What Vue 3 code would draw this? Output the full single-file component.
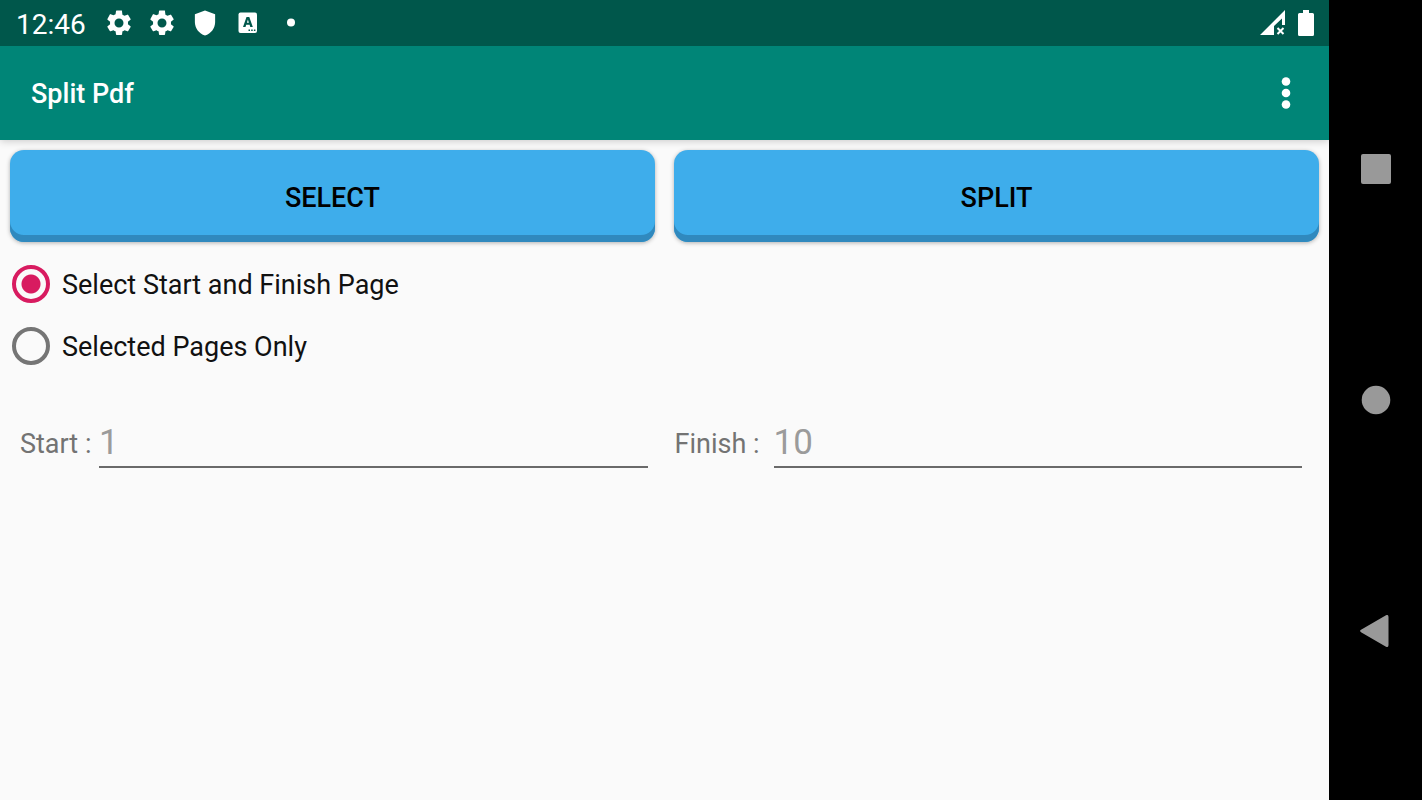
<script setup>
import { ref } from 'vue'

const mode = ref('range')
const start = ref('')
const finish = ref('')
const modes = [
  { value: 'range', label: 'Select Start and Finish Page' },
  { value: 'pages', label: 'Selected Pages Only' },
]
const gear =
  'M19.14 12.94c.04-.3.06-.61.06-.94s-.02-.64-.07-.94l2.03-1.58a.5.5 0 0 0 .12-.61l-1.92-3.32a.5.5 0 0 0-.59-.22l-2.39.96a7 7 0 0 0-1.62-.94l-.36-2.54A.5.5 0 0 0 13.92 2h-3.84a.5.5 0 0 0-.47.41l-.36 2.54a7.4 7.4 0 0 0-1.62.94l-2.39-.96a.5.5 0 0 0-.59.22L2.74 8.87a.5.5 0 0 0 .12.61l2.03 1.58a6 6 0 0 0 0 1.88l-2.03 1.58a.5.5 0 0 0-.12.61l1.92 3.32c.12.22.37.29.59.22l2.39-.96c.5.38 1.03.7 1.62.94l.36 2.54c.05.24.24.41.48.41h3.84c.24 0 .44-.17.47-.41l.36-2.54a7 7 0 0 0 1.62-.94l2.39.96c.22.08.47 0 .59-.22l1.92-3.32a.5.5 0 0 0-.12-.61zM12 15.6a3.6 3.6 0 1 1 0-7.2 3.6 3.6 0 0 1 0 7.2z'
</script>

<template>
  <div class="device">
    <div class="screen">
      <div class="status">
        <span class="clock">12:46</span>
        <div class="notices">
          <svg v-for="n in 2" :key="n" class="icon" viewBox="0 0 24 24"><path :d="gear" /></svg>
          <svg class="icon" viewBox="0 0 24 24">
            <path d="M12 2 3.9 5v6.1c0 5.1 3.3 9.300 8.100 10.900 4.800-1.600 8.100-5.800 8.100-10.900V5z" />
          </svg>
          <svg class="icon" viewBox="0 0 30 30">
            <rect x="5.500" y="4.500" width="18.500" height="20.500" rx="2" />
            <path class="ink" d="M10 19 13.500 9h2.800l3.500 10h-2.500l-.7-2.200h-3.400l-.7 2.200zm3.900-4.200h2l-1-3.200z" />
            <path class="ink" d="M15.500 21.500H17V23h-1.500zM18.200 21.500h1.500V23h-1.500zM20.900 21.500h1.500V23h-1.500z" />
          </svg>
          <svg class="icon" viewBox="0 0 30 30"><circle cx="15" cy="14.500" r="4" /></svg>
        </div>
        <div class="system">
          <svg class="signal" viewBox="0 0 26 26">
            <path fill-rule="evenodd" d="M0 25 25 0v15h-3V8.500L14 16v9z" />
            <path class="cross" d="m17.500 18 6 6m0-6-6 6" />
          </svg>
          <svg class="battery" viewBox="0 0 16 26">
            <path d="M5 0h6v3h3.500a1.500 1.500 0 0 1 1.500 1.500v20a1.500 1.500 0 0 1-1.500 1.500h-13A1.500 1.500 0 0 1 0 24.500v-20A1.500 1.500 0 0 1 1.500 3H5z" />
          </svg>
        </div>
      </div>

      <header class="bar">
        <h1>Split Pdf</h1>
        <button class="more" type="button" aria-label="More options">
          <svg viewBox="0 0 10 32">
            <circle cx="5" cy="4.500" r="4.300" />
            <circle cx="5" cy="16" r="4.300" />
            <circle cx="5" cy="27.500" r="4.300" />
          </svg>
        </button>
      </header>

      <main>
        <div class="actions">
          <button type="button">SELECT</button>
          <button type="button">SPLIT</button>
        </div>
        <div class="modes" role="radiogroup" aria-label="Pages to split">
          <label v-for="m in modes" :key="m.value">
            <input v-model="mode" type="radio" name="mode" :value="m.value" />
            <span>{{ m.label }}</span>
          </label>
        </div>
        <div class="fields">
          <div class="field">
            <label class="short" for="start">Start :</label>
            <input id="start" v-model="start" type="text" inputmode="numeric" placeholder="1" />
          </div>
          <div class="field">
            <label class="long" for="finish">Finish :</label>
            <input id="finish" v-model="finish" type="text" inputmode="numeric" placeholder="10" />
          </div>
        </div>
      </main>
    </div>

    <nav class="keys" aria-label="System navigation">
      <button type="button" aria-label="Recent apps">
        <svg viewBox="0 0 32 32"><rect x="1" y="1" width="30" height="30" rx="2" /></svg>
      </button>
      <button type="button" aria-label="Home">
        <svg viewBox="0 0 32 32"><circle cx="16" cy="16" r="14.300" /></svg>
      </button>
      <button type="button" aria-label="Back">
        <svg viewBox="0 0 32 32">
          <path d="M1 14.800 26 .2Q28.500-.8 28.500 2v28q0 2.800-2.500 1.800L1 17.200q-1.800-1.200 0-2.400z" />
        </svg>
      </button>
    </nav>
  </div>
</template>

<style>
body {
  margin: 0;
}
</style>

<style scoped>
.device {
  display: flex;
  min-height: 100vh;
  background: #000;
  font-family: Roboto, sans-serif;
  font-size: 27px;
}
.device * {
  box-sizing: border-box;
}
svg {
  display: block;
  fill: #fff;
}
button {
  font: inherit;
  border: 0;
  cursor: pointer;
}
.screen {
  flex: 1;
  min-width: 0;
  background: #fafafa;
}
.status {
  position: relative;
  z-index: 1;
  display: flex;
  align-items: center;
  height: 46px;
  padding: 0 15px 0 16px;
  background: #00574b;
  color: #fff;
}
.clock {
  font-size: 28px;
  line-height: 32px;
  padding-top: 3px;
}
.notices {
  display: flex;
  gap: 13px;
  margin-left: 18px;
}
.icon {
  width: 30px;
  height: 30px;
}
.ink {
  fill: #00574b;
}
.system {
  display: flex;
  gap: 12px;
  margin-left: auto;
}
.signal {
  width: 26px;
  height: 26px;
}
.cross {
  fill: none;
  stroke: #fff;
  stroke-width: 2;
}
.battery {
  width: 16px;
  height: 26px;
}
.bar {
  position: relative;
  display: flex;
  align-items: center;
  justify-content: space-between;
  height: 94px;
  padding: 0 28px 0 31px;
  background: #008577;
  box-shadow: 0 1px 8px rgba(0, 0, 0, 0.2);
  color: #fff;
}
h1 {
  margin: 0;
  padding-top: 2px;
  font-size: 27px;
  font-weight: 500;
  line-height: 32px;
}
.more {
  padding: 0 10px;
  background: none;
}
.more svg {
  width: 10px;
  height: 32px;
}
.actions {
  display: flex;
  gap: 19px;
  padding: 10px 10px 0;
}
.actions button {
  flex: 1;
  height: 92px;
  padding: 4px 0 0;
  border-radius: 14px;
  background: #3eadeb;
  box-shadow: inset 0 -7px #3089be, 0 1px 4px rgba(0, 0, 0, 0.3);
  color: #000;
  font-weight: 500;
}
.modes {
  padding: 11px 12px 0;
}
.modes label {
  display: flex;
  align-items: center;
  gap: 12px;
  height: 62px;
  color: #111;
}
.modes input {
  appearance: none;
  width: 38px;
  height: 38px;
  margin: 0;
  border: 4px solid #757575;
  border-radius: 50%;
}
.modes input:checked {
  border-color: #d81b60;
  background: radial-gradient(circle, #d81b60 9px, transparent 10px);
}
.modes span {
  line-height: 32px;
  padding-top: 2px;
}
.fields {
  display: flex;
  gap: 27px;
  padding: 41px 27px 0 20px;
}
.field {
  display: flex;
  flex: 1;
  min-width: 0;
}
.field label {
  flex: none;
  line-height: 32px;
  padding-top: 10px;
  color: #737373;
}
.short {
  width: 79px;
}
.long {
  width: 99px;
}
.field input {
  flex: 1;
  min-width: 0;
  height: 50px;
  padding: 0;
  border: 0;
  border-bottom: 2px solid #6a6a6a;
  outline: 0;
  background: none;
  color: #222;
  font-family: inherit;
  font-size: 35px;
}
.field input::placeholder {
  color: #9b9b9b;
  opacity: 1;
}
.keys {
  display: flex;
  flex-direction: column;
  justify-content: center;
  width: 93px;
  background: #000;
}
.keys button {
  display: grid;
  place-items: center;
  height: 231px;
  padding: 0;
  background: none;
}
.keys svg {
  width: 32px;
  height: 32px;
  fill: #999;
}
</style>
